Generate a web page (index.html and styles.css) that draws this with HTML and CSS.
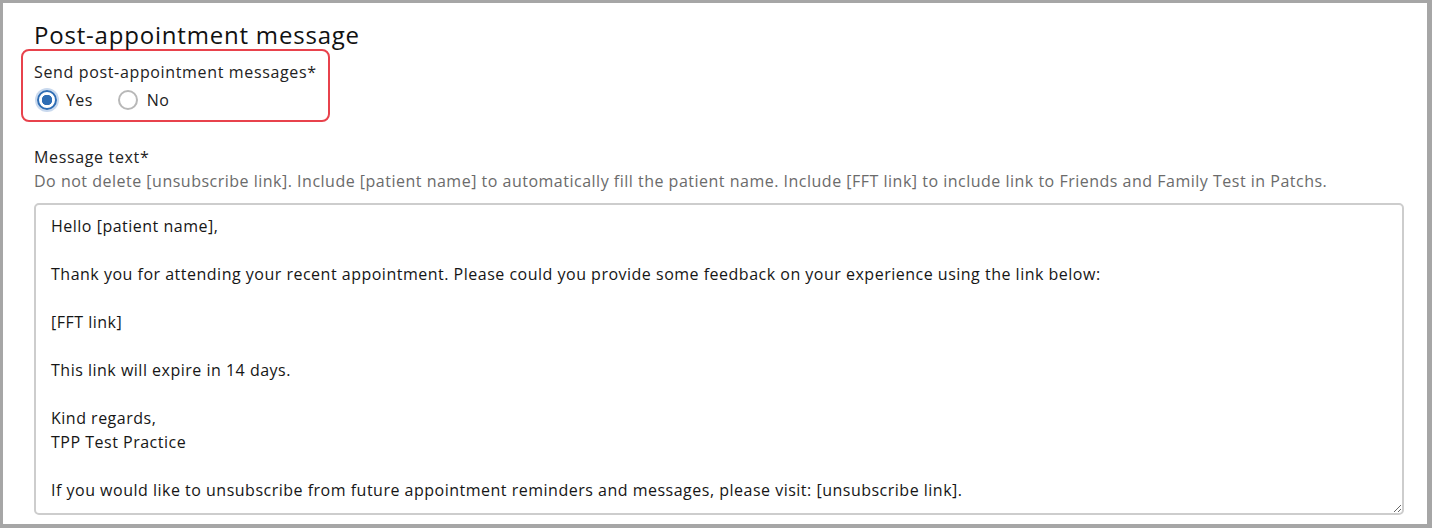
FILE: index.html
```html
<!DOCTYPE html>
<html lang="en">
<head>
  <meta charset="UTF-8">
  <title>Post-appointment message</title>
  <link rel="stylesheet" href="styles.css">
</head>
<body>
  <div class="frame">
    <h2 class="title">Post-appointment message</h2>

    <div class="choice">
      <div class="label">Send post-appointment messages*</div>
      <div class="radios">
        <label class="radio"><input type="radio" name="send" checked> Yes</label>
        <label class="radio"><input type="radio" name="send"> No</label>
      </div>
    </div>

    <div class="field">
      <div class="label">Message text*</div>
      <div class="hint">Do not delete [unsubscribe link]. Include [patient name] to automatically fill the patient name. Include [FFT link] to include link to Friends and Family Test in Patchs.</div>
      <textarea class="message">Hello [patient name],

Thank you for attending your recent appointment. Please could you provide some feedback on your experience using the link below:

[FFT link]

This link will expire in 14 days.

Kind regards,
TPP Test Practice

If you would like to unsubscribe from future appointment reminders and messages, please visit: [unsubscribe link].</textarea>
    </div>
  </div>
</body>
</html>
```

FILE: styles.css
```css
* {
  box-sizing: border-box;
}

body {
  margin: 0;
  font-family: "Open Sans", Arial, sans-serif;
  color: #1b1b1b;
  background-color: white;
}

.frame {
  width: 1432px;
  height: 528px;
  border: 3px solid #a6a6a6;
  border-right-width: 5px;
  border-bottom-width: 4px;
  padding: 18px 23px 0 31px;
  background-color: white;
}

.title {
  margin: 0;
  font-size: 24px;
  font-weight: 400;
  line-height: 28px;
  letter-spacing: 0.8px;
  color: #111;
}

.choice {
  width: 309px;
  margin-left: -13px;
  padding: 9px 11px 8px;
  border: 2px solid #e8424c;
  border-radius: 8px;
}

.label {
  font-size: 16px;
  line-height: 24px;
  letter-spacing: 0.65px;
  white-space: nowrap;
  color: #222;
}

.radios {
  display: flex;
  gap: 22px;
  margin-top: 4px;
}

.radio {
  display: flex;
  align-items: center;
  gap: 9px;
  font-size: 16px;
  line-height: 24px;
  letter-spacing: 0.4px;
  color: #222;
}

.radio input {
  appearance: none;
  width: 20px;
  height: 20px;
  margin: 0 0 0 3px;
  border: 2px solid #b8b8b8;
  border-radius: 50%;
  background-color: white;
}

.radio input:checked {
  border-color: #2e6db4;
  background: radial-gradient(circle, #2e6db4 0 5px, white 5.5px);
  box-shadow: 0 0 0 2px #c9d9ee;
}

.field {
  margin-top: 23px;
}

.hint {
  font-size: 16px;
  line-height: 24px;
  letter-spacing: 0.5px;
  color: #6b6b6b;
}

.message {
  display: block;
  width: 100%;
  height: 312px;
  margin-top: 10px;
  padding: 9px 15px 11px;
  border: 2px solid #cdcdcd;
  border-radius: 5px;
  font-family: inherit;
  font-size: 16px;
  line-height: 24px;
  letter-spacing: 0.5px;
  color: #161616;
  resize: vertical;
  overflow: hidden;
}
```
